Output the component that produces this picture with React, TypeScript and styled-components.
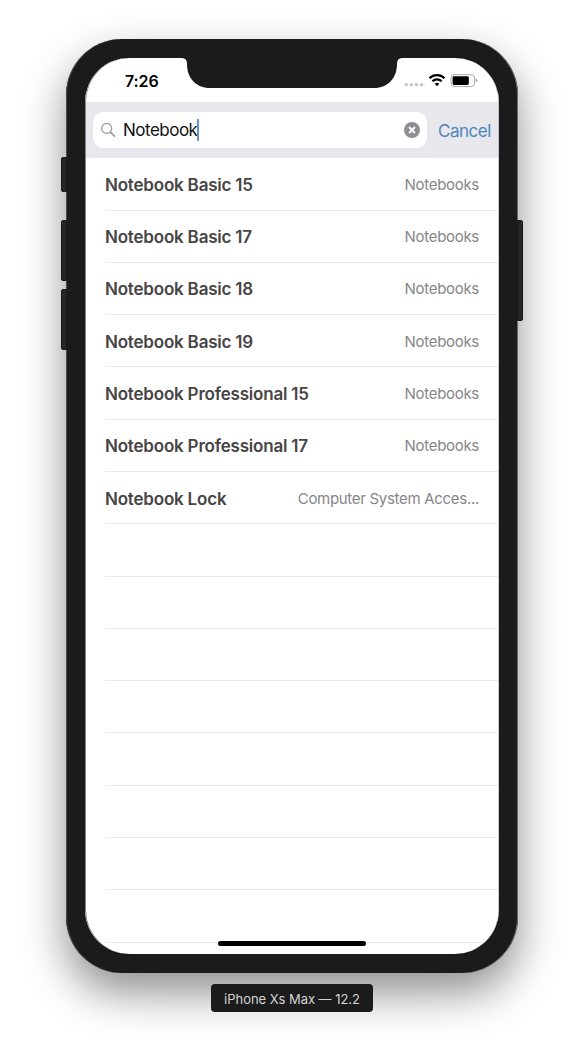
import React from "react";
import styled, { createGlobalStyle } from "styled-components";

const GlobalStyle = createGlobalStyle`
  *, *::before, *::after { box-sizing: border-box; }
  body {
    margin: 0;
    background: #fff;
    font-family: Inter, "Liberation Sans", sans-serif;
  }
`;

const Stage = styled.main`
  width: 584px;
  height: 1048px;
  padding-top: 39px;
  display: flex;
  flex-direction: column;
  align-items: center;
  overflow: hidden;
`;

const Phone = styled.div`
  position: relative;
  width: 452px;
  height: 934px;
  padding: 19px;
  border-radius: 56px;
  background: #1b1b1b;
  box-shadow: inset 1px 0 0 #4a4a4a, inset -1px 0 0 #6a6a6a, 0 20px 44px rgba(0, 0, 0, 0.44);
`;

const SideButton = styled.span<{ $side: "left" | "right"; $top: number; $height: number }>`
  position: absolute;
  top: ${(p) => p.$top}px;
  ${(p) => p.$side}: -5px;
  width: 6px;
  height: ${(p) => p.$height}px;
  background: #262626;
  border: 1px solid #1a1a1a;
  border-radius: ${(p) => (p.$side === "left" ? "2px 0 0 2px" : "0 2px 2px 0")};
`;

const Screen = styled.div`
  position: relative;
  width: 414px;
  height: 896px;
  display: flex;
  flex-direction: column;
  border-radius: 44px;
  background: #fff;
  overflow: hidden;

  &::after {
    content: "";
    position: absolute;
    inset: 0;
    border-radius: inherit;
    box-shadow: inset 1px 0 0 #858585, inset -0.5px 0 0 #999;
    pointer-events: none;
  }
`;

const Notch = styled.svg`
  position: absolute;
  top: 0;
  left: 97px;
  width: 220px;
  height: 30px;
`;

const StatusBar = styled.header`
  flex: none;
  height: 44px;
  padding: 1px 20px 0 40px;
  display: flex;
  align-items: center;
  justify-content: space-between;
`;

const Time = styled.span`
  font-size: 16px;
  font-weight: 600;
  line-height: 20px;
  letter-spacing: -0.1px;
  color: #000;
`;

const StatusIcons = styled.svg`
  width: 75px;
  height: 16px;
`;

const SearchBar = styled.div`
  flex: none;
  height: 56px;
  padding: 0 8px;
  display: flex;
  align-items: center;
  justify-content: space-between;
  background: #e8e7ec;
`;

const SearchField = styled.div`
  width: 334px;
  height: 36px;
  padding: 0 7px 0 8px;
  display: flex;
  align-items: center;
  border-radius: 10px;
  background: #fff;
`;

const Query = styled.span`
  width: 74px;
  margin-left: 7px;
  font-size: 17px;
  line-height: 22px;
  letter-spacing: -0.5px;
  color: #111;
`;

const Caret = styled.span`
  position: relative;
  flex: none;
  width: 2px;
  height: 22px;
  background: #5b95c9;
`;

const ClearIcon = styled.svg`
  margin-left: auto;
`;

const Cancel = styled.span`
  padding-top: 1px;
  font-size: 17px;
  line-height: 22px;
  letter-spacing: -0.45px;
  color: #4a86bd;
`;

const List = styled.ul`
  flex: 1;
  min-height: 0;
  margin: 0;
  padding: 0.21875px 0 0 20px;
  list-style: none;
  overflow: hidden;
`;

const Row = styled.li`
  height: 52.296875px;
  padding: 2px 20px 0 0;
  display: flex;
  align-items: center;
  justify-content: space-between;
  border-bottom: 1px solid #ebebed;
  white-space: nowrap;
`;

const Name = styled.span`
  font-size: 17px;
  font-weight: 600;
  line-height: 22px;
  letter-spacing: -0.2px;
  color: #474545;
`;

const Category = styled.span`
  font-size: 15px;
  line-height: 20px;
  letter-spacing: -0.3px;
  color: #868688;
`;

const HomeIndicator = styled.div`
  position: absolute;
  left: 133px;
  bottom: 8px;
  width: 148px;
  height: 5px;
  border-radius: 3px;
  background: #000;
`;

const DeviceLabel = styled.div`
  position: relative;
  flex: none;
  width: 162px;
  height: 28px;
  margin-top: 11px;
  border-radius: 4px;
  background: #1b1b1b;
  color: #d4d4d4;
  font-size: 13px;
  line-height: 30px;
  letter-spacing: -0.04px;
  text-align: center;
  white-space: nowrap;
`;

const results = [
  { name: "Notebook Basic 15", category: "Notebooks" },
  { name: "Notebook Basic 17", category: "Notebooks" },
  { name: "Notebook Basic 18", category: "Notebooks" },
  { name: "Notebook Basic 19", category: "Notebooks" },
  { name: "Notebook Professional 15", category: "Notebooks" },
  { name: "Notebook Professional 17", category: "Notebooks" },
  { name: "Notebook Lock", category: "Computer System Acces..." },
];

const emptyRows = Array.from({ length: 8 }, (_, i) => i);

export default function App() {
  return (
    <>
      <GlobalStyle />
      <Stage>
        <Phone>
          <SideButton $side="left" $top={118} $height={35} />
          <SideButton $side="left" $top={181} $height={61} />
          <SideButton $side="left" $top={250} $height={61} />
          <SideButton $side="right" $top={181} $height={101} />
          <Screen>
            <StatusBar>
              <Time>7:26</Time>
              <StatusIcons viewBox="0 0 75 16">
                <g fill="#c8c8c8">
                  <circle cx="2.2" cy="11.7" r="1.8" />
                  <circle cx="7.3" cy="11.7" r="1.8" />
                  <circle cx="12.4" cy="11.7" r="1.8" />
                  <circle cx="17.5" cy="11.7" r="1.8" />
                </g>
                <g fill="none" stroke="#000" strokeWidth="2.2">
                  <path d="M25.5 5.2a10.6 10.6 0 0 1 15 0" />
                  <path d="M28.4 8.2a6.5 6.5 0 0 1 9.2 0" />
                </g>
                <path d="M33 13.3l-2.3-2.5a3.3 3.3 0 0 1 4.6 0z" />
                <rect x="47" y="1.7" width="23.6" height="11.9" rx="3.2" fill="none" stroke="#a9a9a9" />
                <rect x="48.6" y="3.3" width="16.2" height="8.7" rx="1.4" />
                <path d="M71.8 5.6q1.7.5 1.7 2t-1.7 2z" fill="#a9a9a9" />
              </StatusIcons>
            </StatusBar>
            <SearchBar>
              <SearchField>
                <svg width="15" height="15" viewBox="0 0 15 15" fill="none" stroke="#98989c" strokeWidth="1.2">
                  <circle cx="5.7" cy="5.4" r="5" />
                  <path d="M9.3 9.1l4.7 4.5" strokeWidth="1.6" />
                </svg>
                <Query>Notebook</Query>
                <Caret />
                <ClearIcon width="16" height="16" viewBox="0 0 16 16">
                  <circle cx="8" cy="8" r="8" fill="#8e8e93" />
                  <path d="M5 5l6 6M11 5l-6 6" stroke="#fff" strokeWidth="1.8" />
                </ClearIcon>
              </SearchField>
              <Cancel>Cancel</Cancel>
            </SearchBar>
            <List>
              {results.map((r) => (
                <Row key={r.name}>
                  <Name>{r.name}</Name>
                  <Category>{r.category}</Category>
                </Row>
              ))}
              {emptyRows.map((i) => (
                <Row key={i} />
              ))}
            </List>
            <Notch viewBox="0 0 220 30">
              <path
                d="M0 0Q5 0 5 6C5 20 14 30 28 30H192C206 30 215 20 215 6Q215 0 220 0Z"
                fill="#1b1b1b"
              />
            </Notch>
            <HomeIndicator />
          </Screen>
        </Phone>
        <DeviceLabel>iPhone Xs Max — 12.2</DeviceLabel>
      </Stage>
    </>
  );
}
